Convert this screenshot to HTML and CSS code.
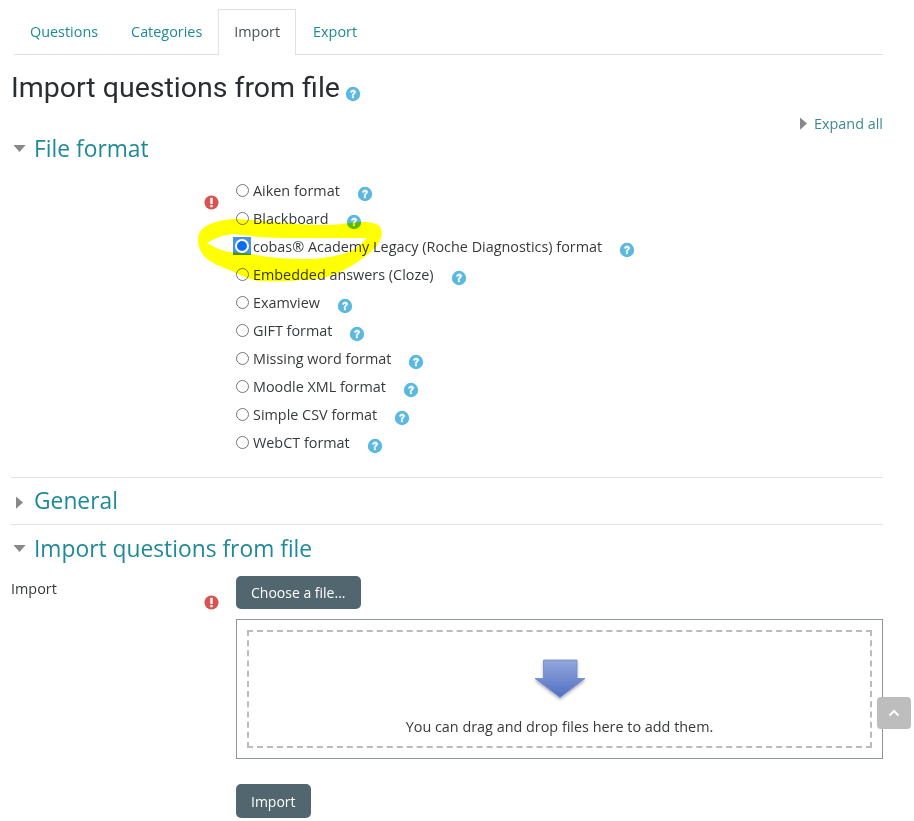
FILE: index.html
```html
<!DOCTYPE html>
<html lang="en">
<head>
<meta charset="utf-8">
<title>Import questions from file</title>
<link rel="stylesheet" href="styles.css">
</head>
<body>
<main class="page">
  <ul class="tabs">
    <li class="tab">Questions</li>
    <li class="tab">Categories</li>
    <li class="tab active">Import</li>
    <li class="tab">Export</li>
  </ul>
  <h2 class="title">Import questions from file<svg class="help small" viewBox="0 0 16 16"><use href="#q"/></svg></h2>
  <div class="expand"><svg class="caret-r" viewBox="0 0 8 14"><path d="M0 0L8 7L0 14Z"/></svg>Expand all</div>

  <section class="fmt">
    <h3 class="sec"><svg class="caret-d" viewBox="0 0 14 8"><path d="M0 0H14L7 8Z"/></svg>File format</h3>
    <div class="row">
      <div class="req"><svg class="alert" viewBox="0 0 16 16"><use href="#e"/></svg></div>
      <div class="radios">
        <label class="opt"><input type="radio" name="f"><span>Aiken format</span><svg class="help" viewBox="0 0 16 16"><use href="#q"/></svg></label>
        <label class="opt"><input type="radio" name="f"><span>Blackboard</span><svg class="help" viewBox="0 0 16 16"><use href="#q"/></svg></label>
        <label class="opt"><span class="focus"><span class="dot"></span></span><span class="tight">cobas® Academy Legacy (Roche Diagnostics) format</span><svg class="help" viewBox="0 0 16 16"><use href="#q"/></svg></label>
        <label class="opt"><input type="radio" name="f"><span>Embedded answers (Cloze)</span><svg class="help" viewBox="0 0 16 16"><use href="#q"/></svg></label>
        <label class="opt"><input type="radio" name="f"><span>Examview</span><svg class="help" viewBox="0 0 16 16"><use href="#q"/></svg></label>
        <label class="opt"><input type="radio" name="f"><span>GIFT format</span><svg class="help" viewBox="0 0 16 16"><use href="#q"/></svg></label>
        <label class="opt"><input type="radio" name="f"><span>Missing word format</span><svg class="help" viewBox="0 0 16 16"><use href="#q"/></svg></label>
        <label class="opt"><input type="radio" name="f"><span>Moodle XML format</span><svg class="help" viewBox="0 0 16 16"><use href="#q"/></svg></label>
        <label class="opt"><input type="radio" name="f"><span>Simple CSV format</span><svg class="help" viewBox="0 0 16 16"><use href="#q"/></svg></label>
        <label class="opt"><input type="radio" name="f"><span>WebCT format</span><svg class="help" viewBox="0 0 16 16"><use href="#q"/></svg></label>
      </div>
    </div>
  </section>

  <section class="general">
    <h3 class="sec"><svg class="caret-r big" viewBox="0 0 8 14"><path d="M0 0L8 7L0 14Z"/></svg>General</h3>
  </section>

  <section class="imp">
    <h3 class="sec"><svg class="caret-d" viewBox="0 0 14 8"><path d="M0 0H14L7 8Z"/></svg>Import questions from file</h3>
    <div class="row">
      <div class="lab">Import</div>
      <div class="req low"><svg class="alert" viewBox="0 0 16 16"><use href="#e"/></svg></div>
      <div class="field">
        <button class="btn">Choose a file...</button>
        <div class="box">
          <div class="drop">
            <svg class="arrow" viewBox="0 0 52 42">
              <defs>
                <linearGradient id="g" x1="0" y1="0" x2="0" y2="1"><stop offset="0" stop-color="#94a7dc"/><stop offset="1" stop-color="#5070c4"/></linearGradient>
                <filter id="s" x="-20%" y="-20%" width="140%" height="150%"><feDropShadow dx="0" dy="2" stdDeviation="1.5" flood-color="#000" flood-opacity=".3"/></filter>
              </defs>
              <path d="M9.5 1H43V19.5H51L26 38.5L1 19.5H9.5Z" fill="url(#g)" stroke="#7088cc" stroke-width=".8" filter="url(#s)"/>
            </svg>
            <div class="hint">You can drag and drop files here to add them.</div>
          </div>
        </div>
        <button class="btn submit">Import</button>
      </div>
    </div>
  </section>
</main>

<div class="top"><svg viewBox="0 0 12 8"><path d="M1.5 6.5L6 2L10.5 6.5" fill="none" stroke="#fff" stroke-width="2"/></svg></div>

<svg class="marker" viewBox="0 0 914 821">
  <path fill="#ffff00" fill-rule="evenodd" d="M198 240C198 234 200 230 206 226C216 221 226 219 236 219C252 220 262 221 276 222C292 224 310 225 326 225C340 225 352 222 364 222C372 222 380 224 381 229C383 235 381 240 376 247C371 252 367 255 363 258C355 264 348 268 340 272C334 275 328 277 322 278C300 281 272 282 258 281C248 279 240 275 232 271C222 267 210 263 204 256C200 251 198 246 198 240Z
  M207 243C212 240 216 238 222 236C228 234.500 232 234 238 234.500C246 235 252 236 258 237C274 238 290 238 306 238C322 238 340 238 367 238C362 243 357 248 349 252C338 256 322 259 306 259C290 259 274 258 262 256C252 254 242 253 232 252.500C222 251 214 247 207 243Z"/>
</svg>

<svg class="defs" width="0" height="0">
  <symbol id="q" viewBox="0 0 16 16">
    <circle cx="8" cy="8" r="7.200" fill="#5bb8de"/>
    <path d="M5.400 6.200C5.500 4.700 6.600 3.900 8.100 3.900C9.700 3.900 10.800 4.800 10.800 6.100C10.800 7.900 8.600 7.900 8.600 9.500H7.100C7.100 7.200 9 7.300 9 6.200C9 5.700 8.600 5.400 8.100 5.400C7.500 5.400 7.100 5.800 7 6.400Z" fill="#fff" stroke="#fff" stroke-width=".5"/>
    <rect x="6.900" y="10.200" width="2" height="2" fill="#fff"/>
  </symbol>
  <symbol id="e" viewBox="0 0 16 16">
    <circle cx="8" cy="8" r="7.500" fill="#d9534f"/>
    <rect x="6.700" y="3" width="2.600" height="6.600" rx=".6" fill="#fff"/>
    <rect x="6.700" y="10.600" width="2.600" height="2.400" rx=".5" fill="#fff"/>
  </symbol>
</svg>
</body>
</html>
```
FILE: styles.css
```css
* { box-sizing: border-box; }
html, body { margin: 0; padding: 0; }
body {
  width: 914px;
  height: 821px;
  overflow: hidden;
  position: relative;
  background: #fff;
  color: #373a3c;
  font-family: "Open Sans", sans-serif;
  font-size: 14.4px;
  line-height: 21px;
}
.page { width: 872px; margin-left: 11px; padding-top: 9px; }
.tabs {
  display: flex;
  list-style: none;
  margin: 0 0 0 3px;
  padding: 0;
  height: 46px;
  border-bottom: 1px solid #dee2e6;
}
.tab {
  padding: 11px 15px 0;
  height: 46px;
  color: #1f8a97;
  border: 1px solid transparent;
  border-bottom: 0;
}
.tab:nth-child(2) { margin-left: 1px; }
.tab:nth-child(4) { margin-left: 1px; }
.tab.active {
  color: #495057;
  background: #fff;
  border-color: #dee2e6;
}
.title {
  font-family: Roboto, sans-serif;
  font-weight: 400;
  font-size: 28.5px;
  line-height: 34px;
  color: #2a2e32;
  margin: 16px 0 0;
}
.help { width: 16px; height: 16px; margin-left: 17px; flex: none; position: relative; top: 4px; }
.help.small { margin-left: 5px; vertical-align: -5px; position: static; }
.expand {
  display: flex;
  justify-content: flex-end;
  align-items: center;
  color: #3e8a94;
  margin-top: 8px;
  height: 21px;
}
.caret-r { width: 7px; height: 13px; fill: #888; margin-right: 7px; }
.caret-r.big { margin-right: 11px; margin-left: 5px; }
.caret-d { width: 13px; height: 7px; fill: #888; margin-right: 8px; margin-left: 2px; vertical-align: middle; position: relative; top: -2px; }
.sec {
  font-weight: 400;
  font-size: 22.8px;
  line-height: 30px;
  color: #1f8a97;
  margin: 0;
}
.fmt { height: 344px; border-bottom: 1px solid #dee2e6; }
.fmt .sec { height: 30px; }
.row { display: flex; }
.req { width: 225px; flex: none; padding: 31px 0 0 193px; }
.req.low { width: 0; padding: 0; position: relative; }
.alert { width: 15px; height: 15px; display: block; }
.req.low .alert { position: absolute; left: -32px; top: 31px; }
.radios { margin-top: 12px; display: flex; flex-direction: column; }
.opt { display: flex; align-items: center; height: 28px; }
.opt input { margin: 0 4px 0 0; width: 13px; height: 13px; flex: none; accent-color: #0075ff; }
.opt span { display: block; }
.focus {
  width: 18px;
  height: 18px;
  margin-left: -3px;
  margin-right: 2px;
  background: #4a92dc;
  position: relative;
  flex: none;
}
.focus .dot {
  position: absolute;
  left: 2px;
  top: 2px;
  width: 14px;
  height: 14px;
  border-radius: 50%;
  background: #0a6cf0;
  background-clip: padding-box;
  border: 2px solid #fff;
}
.general { height: 47px; border-bottom: 1px solid #dee2e6; padding-top: 8px; }
.imp { padding-top: 9px; }
.lab { width: 225px; flex: none; padding-top: 14px; }
.field { margin-top: 12px; width: 647px; flex: none; }
.btn {
  display: block;
  height: 33px;
  padding: 0 15px;
  background: #51666e;
  color: #fff;
  font-family: "Open Sans", sans-serif;
  font-size: 14px;
  border: 0;
  border-radius: 5px;
}
.box {
  margin-top: 10px;
  height: 140px;
  border: 1px solid #8f959e;
  padding: 10px;
}
.drop {
  height: 118px;
  border: 2px dashed #bbb;
  display: flex;
  flex-direction: column;
  align-items: center;
  padding-top: 27px;
}
.arrow { width: 52px; height: 42px; display: block; }
.hint { margin-top: 15px; }
.submit { margin-top: 25px; height: 34px; }
.top {
  position: absolute;
  left: 877px;
  top: 697px;
  width: 34px;
  height: 32px;
  background: #bdbdbd;
  border-radius: 4px;
  display: flex;
  align-items: center;
  justify-content: center;
}
.top svg { width: 12px; height: 8px; }
.marker { position: absolute; left: 0; top: 0; width: 914px; height: 821px; mix-blend-mode: multiply; pointer-events: none; }
.defs { position: absolute; }
```
